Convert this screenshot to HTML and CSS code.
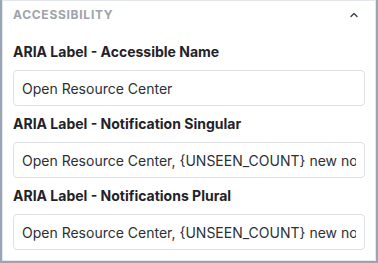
FILE: index.html
```html
<!DOCTYPE html>
<html>
<head>
<meta charset="utf-8">
<link rel="stylesheet" href="styles.css">
</head>
<body>
<section class="card">
  <div class="header">
    <span class="title">ACCESSIBILITY</span>
    <svg class="chev" width="10" height="10" viewBox="0 0 10 10"><path d="M2 6.5 L5 3.5 L8 6.5" fill="none" stroke="#3b4048" stroke-width="1.4" stroke-linecap="round" stroke-linejoin="round"/></svg>
  </div>
  <div class="fields">
    <div class="field">
      <label class="label" for="f1">ARIA Label - Accessible Name</label>
      <input class="input" id="f1" type="text" value="Open Resource Center" readonly>
    </div>
    <div class="field">
      <label class="label" for="f2">ARIA Label - Notification Singular</label>
      <input class="input" id="f2" type="text" value="Open Resource Center, {UNSEEN_COUNT} new notification" readonly>
    </div>
    <div class="field">
      <label class="label" for="f3">ARIA Label - Notifications Plural</label>
      <input class="input" id="f3" type="text" value="Open Resource Center, {UNSEEN_COUNT} new notifications" readonly>
    </div>
  </div>
</section>
</body>
</html>
```
FILE: styles.css
```css
html, body {
  margin: 0;
  padding: 0;
}
body {
  background: #97a6b2;
  font-family: Inter, "Noto Sans", sans-serif;
  height: 263px;
  overflow: hidden;
}
.card {
  margin: 0 2px 0 2px;
  height: 261px;
  box-sizing: border-box;
  background: #fff;
  border: 1px solid #e3e6ea;
  padding: 5px 10px 9px 10px;
}
.header {
  display: flex;
  align-items: center;
  justify-content: space-between;
  height: 17px;
}
.title {
  font-size: 12px;
  line-height: 17px;
  font-weight: 700;
  letter-spacing: 0.06em;
  color: #9ea3aa;
}
.chev {
  margin-right: 6px;
}
.fields {
  margin-top: 19px;
  display: flex;
  flex-direction: column;
  gap: 8px;
}
.field {
  display: flex;
  flex-direction: column;
}
.label {
  font-size: 14px;
  line-height: 20px;
  font-weight: 700;
  color: #1f2329;
  margin-bottom: 8px;
}
.input {
  display: block;
  width: 100%;
  margin: 0;
  box-sizing: border-box;
  height: 36px;
  border: 1px solid #dde1e6;
  border-radius: 4px;
  padding: 7px 8px;
  font-family: Inter, "Noto Sans", sans-serif;
  font-size: 14px;
  line-height: 20px;
  color: #2b2f36;
  background: #fff;
  outline: none;
}
```
